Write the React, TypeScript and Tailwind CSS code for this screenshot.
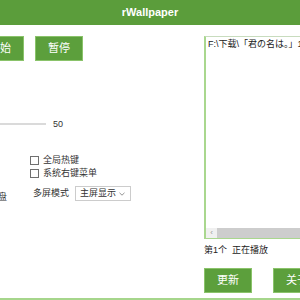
import React from 'react'

const font = "font-['Liberation_Sans','Noto_Sans_CJK_SC',sans-serif]"

function GreenButton({ label }: { label: string }) {
    return (
        <div className="w-[48px] h-[25px] shrink-0 bg-[#5c9f3c] border border-[#8ac36a] flex items-center justify-center text-white text-[11px]">
            {label}
        </div>
    )
}

function Check({ label }: { label: string }) {
    return (
        <div className="flex items-center h-[13px] pl-[30px]">
            <div className="w-[9px] h-[9px] border border-[#707070] bg-white" />
            <span className="ml-[4px] text-[9px] text-[#333] leading-none">{label}</span>
        </div>
    )
}

export default function App() {
    return (
        <div className={`w-[300px] h-[300px] bg-white overflow-hidden flex flex-col ${font}`}>
            <div className="h-[25px] shrink-0 bg-[#5b9d3b] flex items-center justify-center text-white font-bold text-[11px]">
                rWallpaper
            </div>

            <div className="flex-1 flex min-h-0">
                {/* left settings */}
                <div className="w-[204px] shrink-0 pt-[11px]">
                    <div className="flex gap-[11px] ml-[-24px]">
                        <GreenButton label="开始" />
                        <GreenButton label="暂停" />
                    </div>

                    <div className="flex items-center h-[12px] mt-[57px]">
                        <div className="w-[46px] h-[2px] bg-[#dadada]" />
                        <span className="ml-[7px] text-[9px] text-[#333] leading-none">50</span>
                    </div>

                    <div className="mt-[24px]">
                        <Check label="全局热键" />
                        <Check label="系统右键菜单" />
                    </div>

                    <div className="flex mt-[6px] h-[15px]">
                        <span className="w-[9px] ml-[-2px] mt-[7px] text-[9px] text-[#333] leading-none">盘</span>
                        <div className="flex items-center ml-[26px]">
                            <span className="text-[9px] text-[#333] leading-none">多屏模式</span>
                            <div className="ml-[6px] w-[56px] h-[15px] border border-[#cccccc] bg-white flex items-center justify-between pl-[4px] pr-[5px]">
                                <span className="text-[9px] text-[#333] leading-none whitespace-nowrap">主屏显示</span>
                                <svg width="6" height="4" viewBox="0 0 6 4" className="shrink-0">
                                    <path d="M0.5 0.8 L3 3.2 L5.5 0.8" fill="none" stroke="#888" strokeWidth="0.9" />
                                </svg>
                            </div>
                        </div>
                    </div>
                </div>

                {/* right list */}
                <div className="w-[160px] shrink-0 pt-[11px] flex flex-col">
                    <div className="h-[203px] border-l-2 border-t border-b border-[#a9d78e] border-t-[#c8dcbe] flex flex-col">
                        <div className="h-[16px] pl-[2px] flex items-center text-[9px] text-[#222] whitespace-nowrap">
                            F:\下载\「君の名は。」1080p.mp4
                        </div>
                        <div className="flex-1" />
                        <div className="h-[10px] flex bg-[#f0f0f0]">
                            <div className="w-[11px] flex items-center justify-center text-[8px] text-[#999] leading-none">‹</div>
                            <div className="flex-1 bg-[#cdcdcd]" />
                        </div>
                    </div>
                    <div className="h-[12px] mt-[5px] flex items-center text-[9px] text-[#222] leading-none whitespace-nowrap">
                        第1个&nbsp;&nbsp;正在播放
                    </div>
                    <div className="flex gap-[21px] mt-[12px]">
                        <GreenButton label="更新" />
                        <GreenButton label="关于" />
                    </div>
                </div>
            </div>

            <div className="h-[2px] shrink-0 bg-[#a6d68c]" />
        </div>
    )
}
